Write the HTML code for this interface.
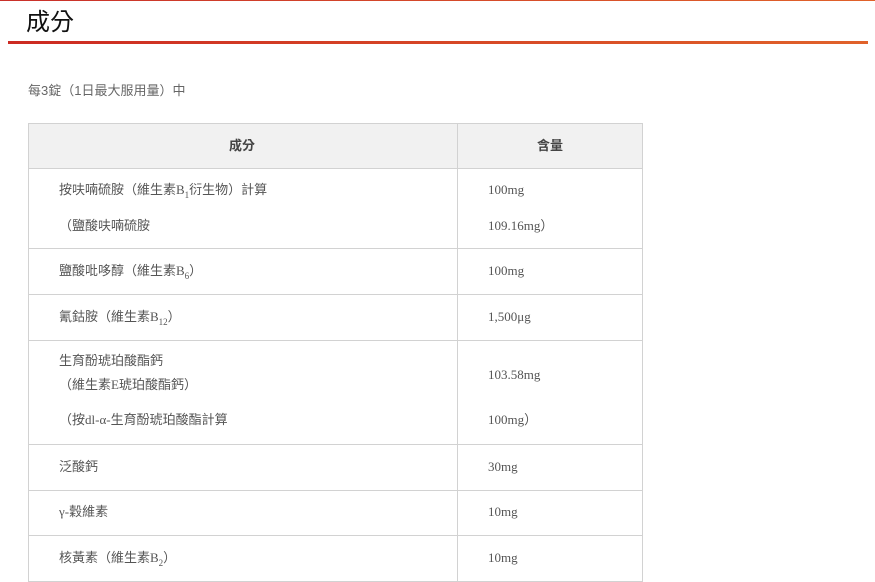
<!DOCTYPE html>
<html><head><meta charset="utf-8"><style>
html,body{margin:0;padding:0;width:875px;height:582px;overflow:hidden;background:#fff;}
body{position:relative;font-family:"Liberation Serif","Noto Sans CJK TC",serif;color:#555;font-size:13px;}
.top{position:absolute;left:0;top:0;width:875px;height:1px;background:linear-gradient(90deg,#c9302a,#e0622a);}
h1{position:absolute;left:26px;top:2px;margin:0;font:24px "Liberation Sans","Noto Sans CJK TC",sans-serif;color:#111;}
.rule{position:absolute;left:8px;top:41px;width:860px;height:3px;background:linear-gradient(90deg,#cc2a22,#e0622a);}
.intro{position:absolute;left:28px;top:80px;font-size:13px;font-family:"Liberation Sans","Noto Sans CJK TC",sans-serif;color:#666;}
.t{position:absolute;left:28px;top:123px;width:613px;height:457px;border:1px solid #d2d2d2;}
.hd{position:absolute;left:0;top:0;width:613px;height:44px;background:#f1f1f1;border-bottom:1px solid #d2d2d2;}
.vl{position:absolute;left:428px;top:0;width:1px;height:457px;background:#d2d2d2;}
.hl{position:absolute;left:0;width:613px;height:1px;background:#d2d2d2;}
.x{position:absolute;white-space:nowrap;font-family:"Liberation Serif","Noto Sans CJK TC",serif;line-height:16px;}
.c1{left:30px;}
.c2{left:459px;}
.th{font-family:"Liberation Sans","Noto Sans CJK TC",sans-serif;font-weight:bold;color:#444;top:14px;}
sub{font-size:9px;vertical-align:-4px;line-height:0;}
</style></head><body>
<div class="top"></div>
<h1>成分</h1>
<div class="rule"></div>
<div class="intro">每3錠（1日最大服用量）中</div>
<div class="t">
<div class="hd"></div>
<div class="vl"></div>
<div class="hl" style="top:124px"></div>
<div class="hl" style="top:170px"></div>
<div class="hl" style="top:216px"></div>
<div class="hl" style="top:320px"></div>
<div class="hl" style="top:366px"></div>
<div class="hl" style="top:411px"></div>
<div class="x th" style="left:200px">成分</div>
<div class="x th" style="left:508px">含量</div>

<div class="x c1" style="top:58px">按呋喃硫胺（維生素B<sub>1</sub>衍生物）計算</div>
<div class="x c2" style="top:58px">100mg</div>
<div class="x c1" style="top:94px">（鹽酸呋喃硫胺</div>
<div class="x c2" style="top:94px">109.16mg）</div>

<div class="x c1" style="top:139px">鹽酸吡哆醇（維生素B<sub>6</sub>）</div>
<div class="x c2" style="top:139px">100mg</div>

<div class="x c1" style="top:185px">氰鈷胺（維生素B<sub>12</sub>）</div>
<div class="x c2" style="top:185px">1,500μg</div>

<div class="x c1" style="top:229px">生育酚琥珀酸酯鈣</div>
<div class="x c1" style="top:253px">（維生素E琥珀酸酯鈣）</div>
<div class="x c2" style="top:243px">103.58mg</div>
<div class="x c1" style="top:288px">（按dl-α-生育酚琥珀酸酯計算</div>
<div class="x c2" style="top:288px">100mg）</div>

<div class="x c1" style="top:335px">泛酸鈣</div>
<div class="x c2" style="top:335px">30mg</div>

<div class="x c1" style="top:380px">γ-穀維素</div>
<div class="x c2" style="top:380px">10mg</div>

<div class="x c1" style="top:426px">核黃素（維生素B<sub>2</sub>）</div>
<div class="x c2" style="top:426px">10mg</div>
</div>
</body></html>
